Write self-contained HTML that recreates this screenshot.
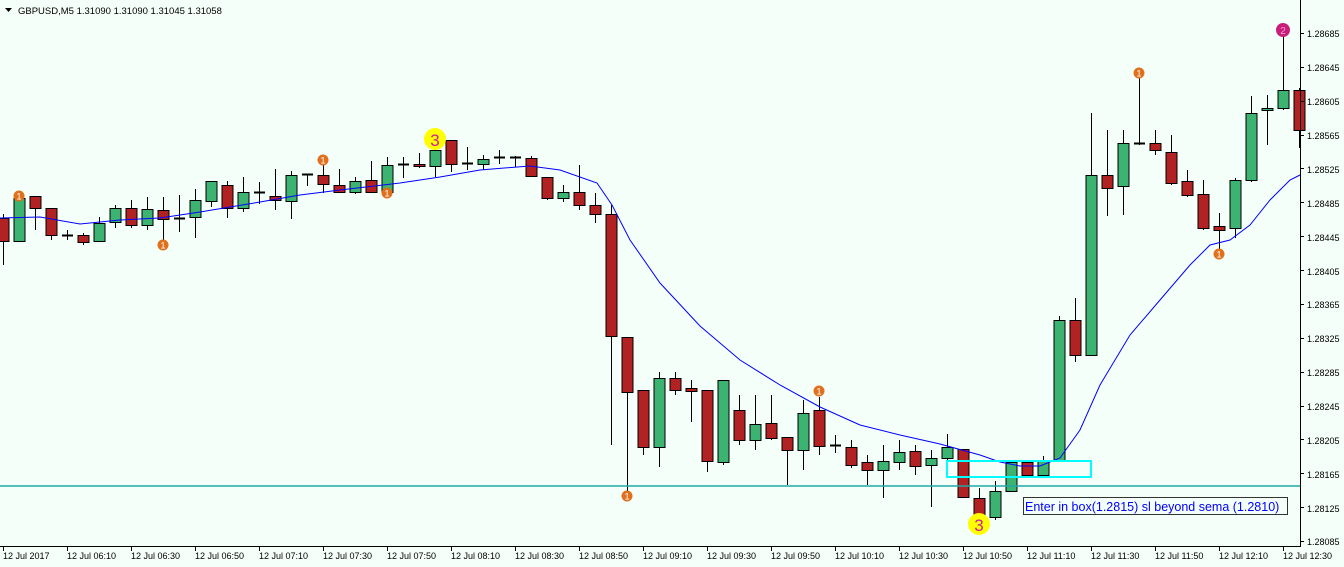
<!DOCTYPE html>
<html><head><meta charset="utf-8"><style>
html,body{margin:0;padding:0;background:#f5fff9;}
body{width:1344px;height:567px;overflow:hidden;position:relative;font-family:"Liberation Sans",sans-serif;}
svg{position:absolute;left:0;top:0;}
</style></head><body>
<svg id="s" width="1344" height="567" xmlns="http://www.w3.org/2000/svg" font-family="Liberation Sans, sans-serif">
<rect width="1344" height="567" fill="#f5fff9"/>
<g id="cd"></g>
<polyline fill="none" stroke="#0000ff" stroke-width="1" points="0,218 40,217 80,224 120,220 160,218 200,212 260,202 300,195 340,190 400,183 440,177 480,170 530,166 560,170 597,183 612,205 630,240 660,283 700,326 740,360 780,385 820,407 860,425 900,435 940,444 980,455 1000,462 1020,466 1040,466 1060,458 1080,430 1100,385 1130,335 1160,300 1190,265 1210,245 1230,240 1250,225 1270,200 1290,180 1300,175"/>
<line x1="0" y1="486" x2="1300" y2="486" stroke="#20a8a8" stroke-width="1.5"/>
<rect x="947" y="461" width="144" height="16" fill="none" stroke="#00ffff" stroke-width="2"/>
<rect x="1023.5" y="497.5" width="264" height="17" fill="none" stroke="#333" stroke-width="1"/>
<text x="1025" y="511" font-size="12.5" fill="#0000ff">Enter in box(1.2815) sl beyond sema (1.2810)</text>
<g id="sm"></g>
<circle cx="435" cy="139" r="11" fill="#ffff00"/><text x="435" y="146" font-size="17" fill="#d0209a" text-anchor="middle">3</text>
<circle cx="979" cy="524" r="11" fill="#ffff00"/><text x="979" y="531" font-size="17" fill="#d0209a" text-anchor="middle">3</text>
<circle cx="1283" cy="30" r="7" fill="#c8207a"/><text x="1283" y="34" font-size="10" fill="#f0a0d0" text-anchor="middle">2</text>
<line x1="1300.5" y1="0" x2="1300.5" y2="547" stroke="#000"/>
<line x1="0" y1="546.5" x2="1301" y2="546.5" stroke="#000"/>
<g id="ax" font-size="9" fill="#000"></g>
<path d="M5 8 L12 8 L8.5 12 Z" fill="#000"/>
<text x="18" y="14" font-size="9.5">GBPUSD,M5  1.31090 1.31090 1.31045 1.31058</text>
<g font-size="9">
<text x="1307" y="37">1.28685</text><text x="1307" y="71">1.28645</text><text x="1307" y="105">1.28605</text><text x="1307" y="139">1.28565</text><text x="1307" y="173">1.28525</text><text x="1307" y="207">1.28485</text><text x="1307" y="241">1.28445</text><text x="1307" y="275">1.28405</text><text x="1307" y="308">1.28365</text><text x="1307" y="342">1.28325</text><text x="1307" y="376">1.28285</text><text x="1307" y="410">1.28245</text><text x="1307" y="444">1.28205</text><text x="1307" y="478">1.28165</text><text x="1307" y="512">1.28125</text><text x="1307" y="545">1.28085</text>
<text x="3" y="559">12 Jul 2017</text><text x="67" y="559">12 Jul 06:10</text><text x="131" y="559">12 Jul 06:30</text><text x="195" y="559">12 Jul 06:50</text><text x="259" y="559">12 Jul 07:10</text><text x="323" y="559">12 Jul 07:30</text><text x="387" y="559">12 Jul 07:50</text><text x="451" y="559">12 Jul 08:10</text><text x="515" y="559">12 Jul 08:30</text><text x="579" y="559">12 Jul 08:50</text><text x="643" y="559">12 Jul 09:10</text><text x="707" y="559">12 Jul 09:30</text><text x="771" y="559">12 Jul 09:50</text><text x="835" y="559">12 Jul 10:10</text><text x="899" y="559">12 Jul 10:30</text><text x="963" y="559">12 Jul 10:50</text><text x="1027" y="559">12 Jul 11:10</text><text x="1091" y="559">12 Jul 11:30</text><text x="1155" y="559">12 Jul 11:50</text><text x="1219" y="559">12 Jul 12:10</text><text x="1283" y="559">12 Jul 12:30</text>
</g>
</svg>
<script>
var NS="http://www.w3.org/2000/svg";
function el(p,t,a){var e=document.createElementNS(NS,t);for(var k in a)e.setAttribute(k,a[k]);p.appendChild(e);return e;}
// [bodyTop, bodyBot, high, low, type] type: g,r,d
var C=[[218,241,214,265,'r'],[198,241,196,241,'g'],[196,208,196,230,'r'],[208,235,208,240,'r'],[235,235,230,240,'d'],[235,242,233,245,'r'],[223,241,217,241,'g'],[208,222,205,228,'g'],[208,225,200,228,'r'],[209,225,197,230,'g'],[210,219,197,245,'r'],[218,218,195,232,'d'],[200,217,189,238,'g'],[181,201,181,207,'g'],[185,208,181,218,'r'],[192,208,177,212,'g'],[192,192,182,204,'d'],[196,200,169,210,'r'],[175,201,171,219,'g'],[174,174,174,186,'d'],[175,184,163,193,'r'],[185,192,169,193,'r'],[181,192,177,194,'g'],[180,192,161,193,'r'],[165,192,157,193,'g'],[164,164,157,178,'d'],[164,166,153,168,'r'],[150,166,145,177,'g'],[140,164,140,172,'r'],[163,163,147,170,'d'],[159,164,155,170,'g'],[157,157,150,164,'d'],[157,157,156,167,'d'],[158,176,156,176,'r'],[177,198,177,200,'r'],[192,198,185,202,'g'],[192,205,165,210,'r'],[205,214,193,223,'r'],[214,336,205,445,'r'],[337,392,337,494,'r'],[390,447,390,455,'r'],[378,447,372,467,'g'],[378,390,372,395,'r'],[388,391,380,422,'r'],[390,461,390,472,'r'],[380,462,380,465,'g'],[410,440,395,445,'r'],[424,440,395,450,'g'],[423,438,395,440,'r'],[437,450,437,485,'r'],[413,450,400,470,'g'],[410,446,397,455,'r'],[445,445,435,453,'d'],[447,465,440,468,'r'],[462,470,455,485,'r'],[461,470,445,498,'g'],[452,462,440,470,'g'],[451,466,445,475,'r'],[458,465,450,507,'g'],[447,458,434,460,'g'],[449,497,449,497,'r'],[498,517,488,530,'r'],[491,517,481,520,'g'],[462,491,460,492,'g'],[462,475,460,476,'r'],[460,475,456,476,'g'],[320,460,316,462,'g'],[320,355,298,362,'r'],[175,355,113,356,'g'],[175,188,130,216,'r'],[143,186,130,215,'g'],[143,143,78,145,'d'],[143,150,130,155,'r'],[152,183,135,185,'r'],[181,195,170,197,'r'],[194,228,180,230,'r'],[226,230,213,250,'r'],[180,228,178,238,'g'],[113,180,96,182,'g'],[108,110,95,145,'g'],[90,108,36,110,'g'],[90,130,88,148,'r']];
var g=document.getElementById('cd');
C.forEach(function(c,i){var x=3+16*i;
 el(g,'line',{x1:x+.5,y1:c[2],x2:x+.5,y2:c[3],stroke:'#000','stroke-width':1});
 if(c[4]=='d'){el(g,'line',{x1:x-5,y1:c[0]+.5,x2:x+6,y2:c[0]+.5,stroke:'#000','stroke-width':2});}
 else el(g,'rect',{x:x-5,y:c[0]+.5,width:11,height:Math.max(c[1]-c[0],2),fill:c[4]=='g'?'#3cb371':'#b22222',stroke:'#000','stroke-width':1});
});
var sm=document.getElementById('sm');
[[19,196],[163,245],[323,160],[387,193],[627,496],[819,391],[1139,73],[1219,254]].forEach(function(p){
 el(sm,'circle',{cx:p[0],cy:p[1],r:5.5,fill:'#e0701c'});
 var t=el(sm,'text',{x:p[0],y:p[1]+3.5,'font-size':9,fill:'#fff','text-anchor':'middle'});t.textContent='1';
});
var ax=document.getElementById('ax');
for(var i=0;i<16;i++){var y=33+i*33.87;el(ax,'line',{x1:1300,y1:Math.round(y)+.5,x2:1304,y2:Math.round(y)+.5,stroke:'#000'});}
for(var i=0;i<21;i++){var x=3+64*i;el(ax,'line',{x1:x+.5,y1:547,x2:x+.5,y2:551,stroke:'#000'});}
</script>
</body></html>
